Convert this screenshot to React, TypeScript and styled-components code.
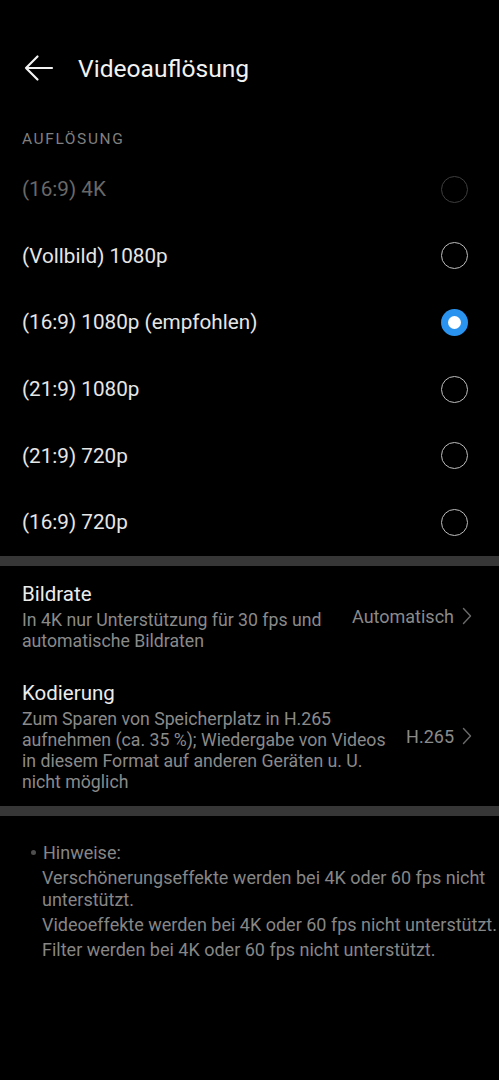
import React from 'react';
import styled, { createGlobalStyle } from 'styled-components';

const GlobalStyle = createGlobalStyle`
  html, body {
    margin: 0;
    padding: 0;
    background: #000;
  }
  body {
    font-family: Roboto, 'Noto Sans', 'Liberation Sans', sans-serif;
    -webkit-font-smoothing: antialiased;
  }
`;

export const Screen = styled.div`
  width: 499px;
  min-height: 1080px;
  background: #000;
  display: flex;
  flex-direction: column;
`;

export const Header = styled.header`
  display: flex;
  align-items: center;
  gap: 24px;
  height: 48px;
  padding: 44px 0 0 23px;
`;

export const BackButton = styled.button`
  display: flex;
  align-items: center;
  justify-content: center;
  width: 31px;
  height: 30px;
  padding: 0;
  border: none;
  background: none;
  cursor: pointer;
`;

export const Title = styled.h1`
  margin: 0;
  font-size: 24.6px;
  font-weight: 400;
  color: #f2f2f2;
`;

export const SectionLabel = styled.div`
  padding: 37px 22px 7px;
  font-size: 15.5px;
  line-height: 20px;
  letter-spacing: 1.6px;
  color: #7f7f7f;
`;

export const OptionList = styled.div`
  display: flex;
  flex-direction: column;
`;

export const OptionRow = styled.label<{ $disabled?: boolean }>`
  display: flex;
  align-items: center;
  justify-content: space-between;
  height: 66.6px;
  padding: 0 31px 0 22px;
  font-size: 20.7px;
  color: ${(p) => (p.$disabled ? '#686868' : '#e6e6e6')};
  cursor: ${(p) => (p.$disabled ? 'default' : 'pointer')};
`;

export const Radio = styled.span<{ $checked?: boolean; $disabled?: boolean }>`
  position: relative;
  box-sizing: border-box;
  width: 27px;
  height: 27px;
  border-radius: 50%;
  border: ${(p) =>
    p.$checked ? 'none' : `1.5px solid ${p.$disabled ? '#3e3e3e' : '#bdbdbd'}`};
  background: ${(p) => (p.$checked ? '#2a93ef' : 'transparent')};

  &::after {
    content: '';
    display: ${(p) => (p.$checked ? 'block' : 'none')};
    position: absolute;
    left: 50%;
    top: 50%;
    width: 13px;
    height: 13px;
    margin: -6.5px 0 0 -6.5px;
    border-radius: 50%;
    background: #fff;
  }
`;

export const Divider = styled.div`
  height: 10px;
  background: #363636;
`;

export const SettingList = styled.div`
  display: flex;
  flex-direction: column;
`;

export const SettingRow = styled.div`
  display: flex;
  align-items: center;
  gap: 12px;
  padding: 15px 27px 13px 22px;
  cursor: pointer;
`;

export const SettingText = styled.div`
  flex: 1;
  min-width: 0;
`;

export const SettingTitle = styled.div`
  font-size: 20.5px;
  line-height: 26px;
  color: #ececec;
`;

export const SettingDesc = styled.div`
  margin-top: 3px;
  font-size: 17.7px;
  line-height: 21px;
  color: #8a8a8a;
`;

export const SettingValue = styled.div`
  display: flex;
  align-items: center;
  gap: 8px;
  font-size: 18px;
  color: #8a8a8a;
  white-space: nowrap;
`;

export const Notes = styled.section`
  padding: 26px 0 0 31px;
  color: #868686;
  font-size: 18px;
  line-height: 22px;
`;

export const NotesHeading = styled.div`
  display: flex;
  align-items: center;
  gap: 7px;

  &::before {
    content: '';
    width: 5px;
    height: 5px;
    border-radius: 50%;
    background: #4e4e4e;
  }
`;

export const NotesBody = styled.div`
  display: flex;
  flex-direction: column;
  gap: 3px;
  margin-top: 3px;
  padding-left: 11px;
`;

const BackArrow = () => (
  <svg width="31" height="28" viewBox="0 0 31 28" fill="none">
    <path
      d="M29 14H3M14.5 2.5L3 14l11.5 11.5"
      stroke="#f2f2f2"
      strokeWidth="2.2"
      strokeLinecap="round"
      strokeLinejoin="round"
    />
  </svg>
);

const Chevron = () => (
  <svg width="10" height="18" viewBox="0 0 10 18" fill="none">
    <path d="M1.5 1.5L8.5 9l-7 7.5" stroke="#6a6a6a" strokeWidth="1.4" strokeLinecap="round" strokeLinejoin="round" />
  </svg>
);

const resolutions = [
  { label: '(16:9) 4K', disabled: true },
  { label: '(Vollbild) 1080p' },
  { label: '(16:9) 1080p (empfohlen)', checked: true },
  { label: '(21:9) 1080p' },
  { label: '(21:9) 720p' },
  { label: '(16:9) 720p' },
];

const settings = [
  {
    title: 'Bildrate',
    desc: 'In 4K nur Unterstützung für 30 fps und automatische Bildraten',
    value: 'Automatisch',
  },
  {
    title: 'Kodierung',
    desc: 'Zum Sparen von Speicherplatz in H.265 aufnehmen (ca. 35 %); Wiedergabe von Videos in diesem Format auf anderen Geräten u. U. nicht möglich',
    value: 'H.265',
  },
];

const notes = [
  'Verschönerungseffekte werden bei 4K oder 60 fps nicht unterstützt.',
  'Videoeffekte werden bei 4K oder 60 fps nicht unterstützt.',
  'Filter werden bei 4K oder 60 fps nicht unterstützt.',
];

export default function App() {
  return (
    <>
      <GlobalStyle />
      <Screen>
        <Header>
          <BackButton aria-label="Zurück">
            <BackArrow />
          </BackButton>
          <Title>Videoauflösung</Title>
        </Header>

        <SectionLabel>AUFLÖSUNG</SectionLabel>
        <OptionList>
          {resolutions.map((r) => (
            <OptionRow key={r.label} $disabled={r.disabled}>
              <span>{r.label}</span>
              <Radio $checked={r.checked} $disabled={r.disabled} />
            </OptionRow>
          ))}
        </OptionList>

        <Divider />

        <SettingList>
          {settings.map((s) => (
            <SettingRow key={s.title}>
              <SettingText>
                <SettingTitle>{s.title}</SettingTitle>
                <SettingDesc>{s.desc}</SettingDesc>
              </SettingText>
              <SettingValue>
                {s.value}
                <Chevron />
              </SettingValue>
            </SettingRow>
          ))}
        </SettingList>

        <Divider />

        <Notes>
          <NotesHeading>Hinweise:</NotesHeading>
          <NotesBody>
            {notes.map((n) => (
              <div key={n}>{n}</div>
            ))}
          </NotesBody>
        </Notes>
      </Screen>
    </>
  );
}
